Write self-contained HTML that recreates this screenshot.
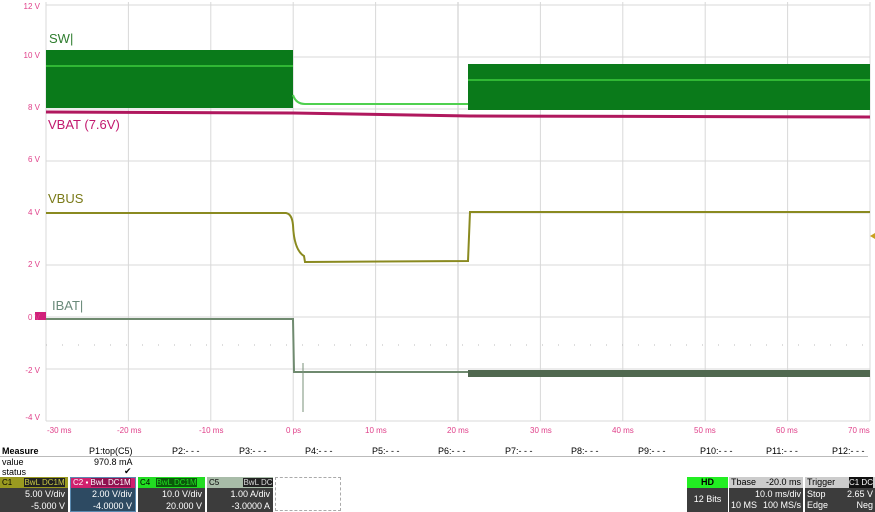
<!DOCTYPE html><html><head><style>
body{margin:0;width:875px;height:512px;background:#fff;font-family:"Liberation Sans",sans-serif;position:relative;overflow:hidden}
.a{position:absolute;white-space:nowrap}
.yl{color:#e0408a;font-size:8px;text-align:right;width:40px;left:0}
.xl{color:#e0408a;font-size:8px;top:426px}
.m{font-size:9px;top:446px}
.hd{position:absolute;font-size:9px;line-height:12px;right:3px;top:11px;text-align:right}
.ch{height:11px;font-size:8px;line-height:11px;padding-left:2px;overflow:hidden}
</style></head><body>
<svg class="a" style="left:0;top:0" width="875" height="440">
<g stroke="#d8d8d8" stroke-width="1">
<line x1="46" y1="2" x2="46" y2="421"/><line x1="128.4" y1="2" x2="128.4" y2="421"/><line x1="210.8" y1="2" x2="210.8" y2="421"/><line x1="293.2" y1="2" x2="293.2" y2="421"/><line x1="375.6" y1="2" x2="375.6" y2="421"/><line x1="458" y1="2" x2="458" y2="421" stroke="#c8c8c8"/><line x1="540.4" y1="2" x2="540.4" y2="421"/><line x1="622.8" y1="2" x2="622.8" y2="421"/><line x1="705.2" y1="2" x2="705.2" y2="421"/><line x1="787.6" y1="2" x2="787.6" y2="421"/><line x1="870" y1="2" x2="870" y2="421"/>
<line x1="46" y1="5" x2="870" y2="5"/><line x1="46" y1="57" x2="870" y2="57"/><line x1="46" y1="109" x2="870" y2="109"/><line x1="46" y1="161" x2="870" y2="161"/><line x1="46" y1="213" x2="870" y2="213"/><line x1="46" y1="265" x2="870" y2="265"/><line x1="46" y1="317" x2="870" y2="317"/><line x1="46" y1="369" x2="870" y2="369"/><line x1="46" y1="421" x2="870" y2="421"/>
</g>
<line x1="46" y1="345" x2="870" y2="345" stroke="#bbb" stroke-dasharray="1,15"/>
<rect x="46" y="50" width="247" height="58" fill="#0a7a1a"/>
<line x1="46" y1="66" x2="293" y2="66" stroke="#3ccc3c" stroke-width="1.5"/>
<path d="M293 95 Q296 104 305 104 L468 104" stroke="#4fd04f" stroke-width="2" fill="none"/>
<rect x="468" y="64" width="402" height="46" fill="#0a7a1a"/>
<line x1="468" y1="80" x2="870" y2="80" stroke="#3ccc3c" stroke-width="1.5"/>
<path d="M46 112 L293 113 L470 116 L870 117" stroke="#b0185e" stroke-width="3" fill="none"/>
<path d="M46 213 L286 213 Q292 214 293 225 Q294 250 304 256 L305 262 L468 261 L470 212 L870 212" stroke="#8a8a20" stroke-width="2" fill="none"/>
<path d="M46 319 L293 319 L294 372 L468 372" stroke="#6f8a6f" stroke-width="2" fill="none"/>
<line x1="303" y1="363" x2="303" y2="412" stroke="#7a907a"/>
<rect x="468" y="370" width="402" height="7" fill="#50684f"/>
<path d="M870 236 l5 -3 v6z" fill="#c8a020"/>
<rect x="35" y="312" width="11" height="8" fill="#d0207a"/>
</svg>
<div class="a yl" style="top:2px">12 V</div><div class="a yl" style="top:51px">10 V</div><div class="a yl" style="top:103px">8 V</div><div class="a yl" style="top:155px">6 V</div><div class="a yl" style="top:208px">4 V</div><div class="a yl" style="top:260px">2 V</div><div class="a yl" style="top:313px">0 V</div><div class="a yl" style="top:366px">-2 V</div><div class="a yl" style="top:413px">-4 V</div>
<div class="a" style="left:49px;top:31px;font-size:13px;color:#2e7d2e">SW|</div>
<div class="a" style="left:48px;top:117px;font-size:13px;color:#c2186e">VBAT (7.6V)</div>
<div class="a" style="left:48px;top:191px;font-size:13px;color:#7a7a18">VBUS</div>
<div class="a" style="left:52px;top:298px;font-size:13px;color:#6a8a7a">IBAT|</div>
<div class="a xl" style="left:47px">-30 ms</div><div class="a xl" style="left:117px">-20 ms</div><div class="a xl" style="left:199px">-10 ms</div><div class="a xl" style="left:286px">0 ps</div><div class="a xl" style="left:365px">10 ms</div><div class="a xl" style="left:447px">20 ms</div><div class="a xl" style="left:530px">30 ms</div><div class="a xl" style="left:612px">40 ms</div><div class="a xl" style="left:694px">50 ms</div><div class="a xl" style="left:776px">60 ms</div><div class="a xl" style="left:848px">70 ms</div>
<div class="a m" style="left:2px;font-weight:bold">Measure</div>
<div class="a m" style="left:89px">P1:top(C5)</div><div class="a m" style="left:172px">P2:- - -</div><div class="a m" style="left:239px">P3:- - -</div><div class="a m" style="left:305px">P4:- - -</div><div class="a m" style="left:372px">P5:- - -</div><div class="a m" style="left:438px">P6:- - -</div><div class="a m" style="left:505px">P7:- - -</div><div class="a m" style="left:571px">P8:- - -</div><div class="a m" style="left:638px">P9:- - -</div><div class="a m" style="left:700px">P10:- - -</div><div class="a m" style="left:766px">P11:- - -</div><div class="a m" style="left:832px">P12:- - -</div>
<div class="a" style="left:0;top:456px;width:868px;height:1px;background:#bbb"></div>
<div class="a" style="left:2px;top:457px;font-size:9px">value</div><div class="a" style="left:94px;top:457px;font-size:9px">970.8 mA</div>
<div class="a" style="left:2px;top:467px;font-size:9px">status</div><div class="a" style="left:124px;top:466px;font-size:9px">✔</div>
<div class="a" style="left:0;top:477px;width:68px;height:35px;background:#3c3c3c"><div class="ch" style="background:#9a9a20">C1 <span style="background:#222;color:#cc4;margin-left:10px">BwL DC1M</span></div><div class="hd" style="color:#fff">5.00 V/div<br>-5.000 V</div></div>
<div class="a" style="left:70px;top:477px;width:66px;height:35px;background:#2d4a62;border:1px solid #5a8ab0;box-sizing:border-box"><div class="ch" style="background:#d0206e;color:#fff;height:10px;line-height:10px">C2 ▪ <span style="background:#901050">BwL DC1M</span></div><div class="hd" style="color:#fff;top:10px">2.00 V/div<br>-4.0000 V</div></div>
<div class="a" style="left:138px;top:477px;width:67px;height:35px;background:#3c3c3c"><div class="ch" style="background:#22dd22">C4 <span style="background:#0a5a0a;color:#2d2;margin-left:4px">BwL DC1M</span></div><div class="hd" style="color:#fff">10.0 V/div<br>20.000 V</div></div>
<div class="a" style="left:207px;top:477px;width:66px;height:35px;background:#3c3c3c"><div class="ch" style="background:#a8bca8">C5 <span style="margin-left:22px;background:#222;color:#ddd">BwL DC</span></div><div class="hd" style="color:#fff">1.00 A/div<br>-3.0000 A</div></div>
<div class="a" style="left:275px;top:477px;width:66px;height:34px;border:1px dashed #aaa;box-sizing:border-box"></div>
<div class="a" style="left:687px;top:477px;width:41px;height:35px;background:#3c3c3c;color:#fff;font-size:9px;text-align:center"><div style="background:#22ee22;color:#000;font-weight:bold;height:11px;line-height:11px">HD</div><div style="line-height:22px">12 Bits</div></div>
<div class="a" style="left:729px;top:477px;width:74px;height:35px;background:#3c3c3c;color:#fff;font-size:9px"><div style="background:#ccc;color:#000;height:11px;line-height:11px;padding:0 2px">Tbase<span style="float:right">-20.0 ms</span></div><div style="text-align:right;padding-right:2px;line-height:12px">10.0 ms/div</div><div style="line-height:11px;padding:0 2px">10 MS<span style="float:right">100 MS/s</span></div></div>
<div class="a" style="left:805px;top:477px;width:70px;height:35px;background:#3c3c3c;color:#fff;font-size:9px"><div style="background:#ccc;color:#000;height:11px;line-height:11px;padding:0 2px">Trigger<span style="float:right;background:#111;color:#fff;font-size:8px">C1 DC</span></div><div style="line-height:12px;padding:0 2px">Stop<span style="float:right">2.65 V</span></div><div style="line-height:11px;padding:0 2px">Edge<span style="float:right">Neg</span></div></div>
</body></html>
